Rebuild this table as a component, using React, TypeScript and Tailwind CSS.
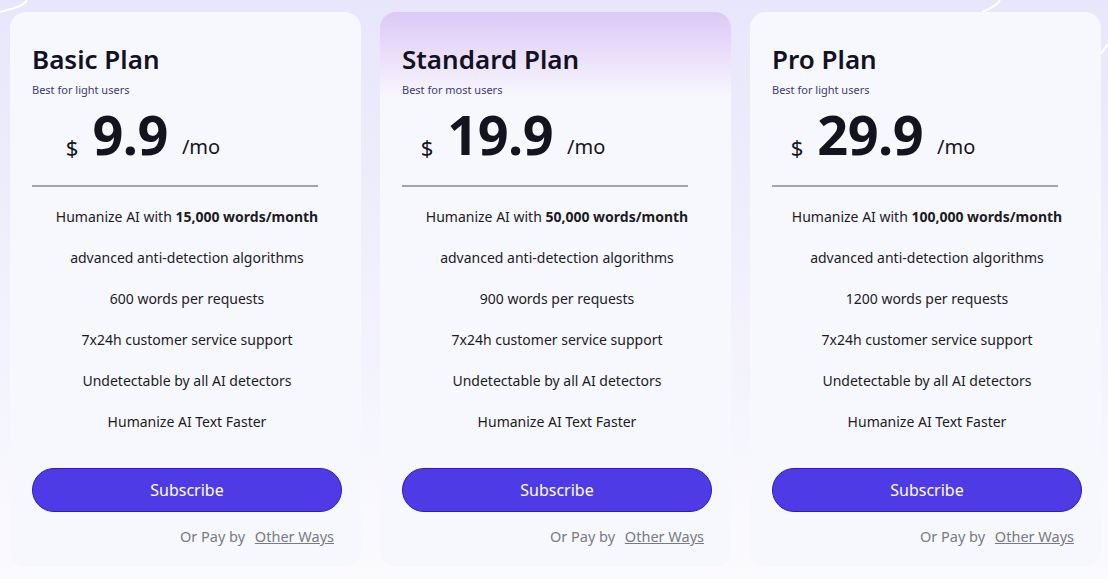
const plans = [
  {
    name: 'Basic Plan',
    tagline: 'Best for light users',
    price: '9.9',
    words: '15,000 words/month',
    perRequest: '600 words per requests',
    featured: false,
  },
  {
    name: 'Standard Plan',
    tagline: 'Best for most users',
    price: '19.9',
    words: '50,000 words/month',
    perRequest: '900 words per requests',
    featured: true,
  },
  {
    name: 'Pro Plan',
    tagline: 'Best for light users',
    price: '29.9',
    words: '100,000 words/month',
    perRequest: '1200 words per requests',
    featured: false,
  },
];

function PlanCard({ plan }: { plan: (typeof plans)[number] }) {
  const features = [
    'advanced anti-detection algorithms',
    plan.perRequest,
    '7x24h customer service support',
    'Undetectable by all AI detectors',
    'Humanize AI Text Faster',
  ];

  return (
    <article
      className={
        'relative z-10 w-[351px] h-[555px] shrink-0 rounded-[16px] pl-[22px] pr-[19px] pt-[31px] flex flex-col ' +
        (plan.featured
          ? 'bg-[linear-gradient(180deg,#dcc9f6_0px,#ece3fa_50px,#f7f7fe_85px)]'
          : 'bg-[#f7f7fe]')
      }
    >
      <h3 className="text-[26px] leading-[32px] font-semibold text-[#121224]">
        {plan.name}
      </h3>
      <p className="mt-[8px] text-[11px] leading-[14px] text-[#3f3b72]">
        {plan.tagline}
      </p>

      {/* price */}
      <div className="mt-[12px] w-[222px] h-[50px] flex items-end justify-center text-[#141420]">
        <span className="text-[22px] leading-[22px] mb-[1px]">$</span>
        <span className="ml-[14px] text-[54px] leading-[50px] font-bold tracking-[-0.5px]">
          {plan.price}
        </span>
        <span className="ml-[14px] text-[20px] leading-[22px] mb-[1px]">
          /mo
        </span>
      </div>

      <div className="mt-[26px] w-[286px] h-[2px] bg-[#a3a3a8]" />

      <ul className="mt-[9px] flex flex-col text-[14px] text-[#1c1c24]">
        <li className="h-[41px] flex items-center justify-center">
          <span>
            Humanize AI with <strong className="font-bold">{plan.words}</strong>
          </span>
        </li>
        {features.map((f) => (
          <li key={f} className="h-[41px] flex items-center justify-center">
            {f}
          </li>
        ))}
      </ul>

      <button className="mt-[26px] h-[44px] w-full rounded-full bg-[#4f3be6] border border-[#2a1bc4] text-white text-[16px]">
        Subscribe
      </button>

      <p className="mt-[14px] pr-[8px] text-right text-[14.5px] text-[#7a7a84]">
        Or Pay by <span className="ml-[6px] underline">Other Ways</span>
      </p>
    </article>
  );
}

export default function App() {
  return (
    <main
      className="relative w-[1108px] h-[579px] overflow-hidden bg-[linear-gradient(180deg,#e8e6fb_0px,#eeedfc_200px,#fbfbfe_579px)]"
      style={{ fontFamily: '"Noto Sans", "Open Sans", sans-serif' }}
    >
      {/* decorative lines */}
      <svg
        className="absolute inset-0 z-0"
        width="1108"
        height="579"
        viewBox="0 0 1108 579"
        fill="none"
        aria-hidden="true"
      >
        <path d="M0 12 C12 9 24 6 27 0" stroke="#ffffff" strokeWidth="2" />
        <path d="M982 12 C992 8 998 4 1000 0" stroke="#ffffff" strokeWidth="2" />
        <path d="M1100 55 C1104 50 1106 46 1108 44" stroke="#ffffff" strokeWidth="2" />
      </svg>

      <section className="relative z-10 flex gap-[19px] pl-[10px] pt-[12px]">
        {plans.map((p) => (
          <PlanCard key={p.name} plan={p} />
        ))}
      </section>
    </main>
  );
}
